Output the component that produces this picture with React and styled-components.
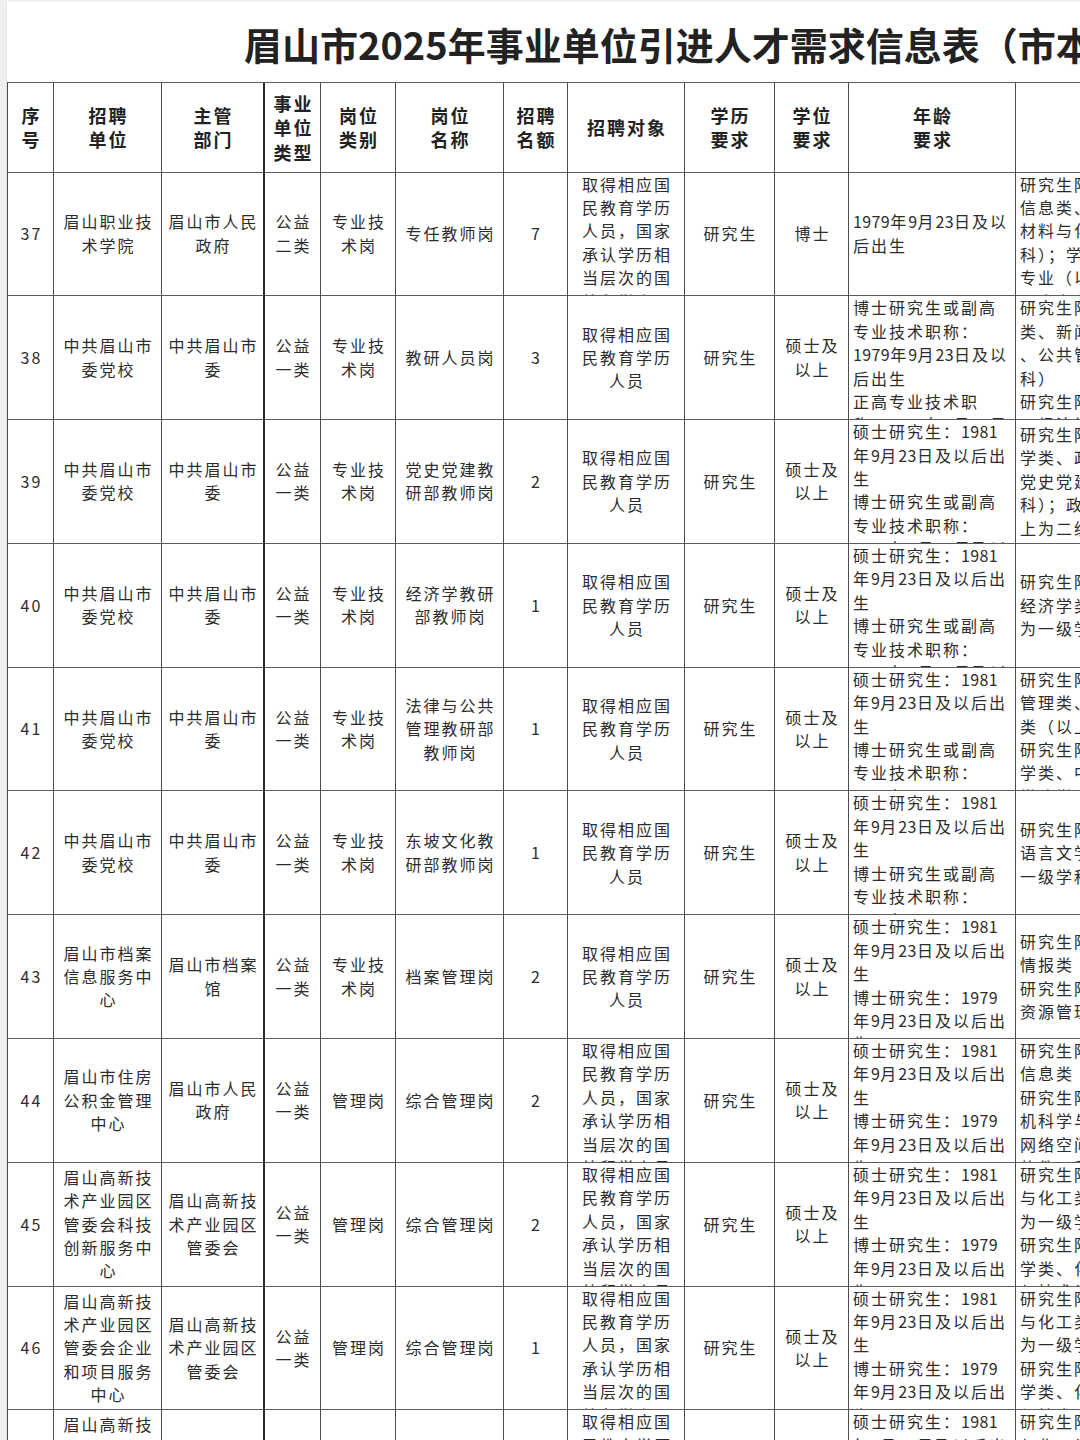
import React from "react";
import styled, { createGlobalStyle } from "styled-components";

const COLS = [46, 108, 103, 56, 75, 108, 64, 117, 90, 74, 167, 260];
const ALIGN = ["c", "c", "c", "c", "c", "c", "c", "c", "c", "c", "l", "l"];

const GlobalStyle = createGlobalStyle`
  html, body { margin: 0; padding: 0; background: #efefef; overflow: hidden; }
  body { font-family: "Noto Sans CJK SC", "Noto Sans", sans-serif; color: #333; }
`;

const Sheet = styled.div`
  margin: 2px 0 0 6px;
  background: #fff;
  width: max-content;
  min-height: 1440px;
  border-left: 1px solid #e4e4e4;
`;

const Title = styled.h1`
  margin: 0;
  height: 80px;
  box-sizing: border-box;
  padding: 2px 0 0 237px;
  display: flex;
  align-items: center;
  font-size: 38px;
  font-weight: 700;
  color: #222;
  white-space: nowrap;
`;

const Grid = styled.div`
  display: grid;
  grid-template-columns: ${COLS.map((c) => c + "px").join(" ")};
  grid-template-rows: 89.5px;
  grid-auto-rows: 123.8px;
  border-top: 1.5px solid #5a5a5a;
  border-left: 1.5px solid #4a4a4a;
`;

const Cell = styled.div`
  box-sizing: border-box;
  border-right: ${(p) => (p.$thick ? "2px solid #2a2a2a" : "1.5px solid #4d4d4d")};
  border-bottom: 1.5px solid #5e5e5e;
  overflow: hidden;
  display: flex;
  flex-direction: column;
  justify-content: safe center;
  align-items: ${(p) => (p.$left ? "flex-start" : "center")};
  padding: 0 ${(p) => (p.$left ? "2px 0 4px" : "1px 0 3px")};
`;

const HeadCell = styled(Cell)`
  color: #222;
`;

const Line = styled.div`
  white-space: nowrap;
  font-size: 16px;
  line-height: 23.4px;
  letter-spacing: 2px;
  color: #2c2c2c;
`;

const Num = styled.span`
  letter-spacing: 0.4px;
`;

const HeadLine = styled.div`
  white-space: nowrap;
  font-size: 18px;
  font-weight: 700;
  line-height: 24.5px;
  letter-spacing: 2px;
  color: #222;
`;

const HEAD = [
  ["序", "号"],
  ["招聘", "单位"],
  ["主管", "部门"],
  ["事业", "单位", "类型"],
  ["岗位", "类别"],
  ["岗位", "名称"],
  ["招聘", "名额"],
  ["招聘对象"],
  ["学历", "要求"],
  ["学位", "要求"],
  ["年龄", "要求"],
  ["专业要求"],
];

const OBJ_LONG = ["取得相应国", "民教育学历", "人员，国家", "承认学历相", "当层次的国", "外留学人员"];
const OBJ_SHORT = ["取得相应国", "民教育学历", "人员"];
const AGE_A = ["硕士研究生：1981", "年9月23日及以后出", "生", "博士研究生或副高", "专业技术职称：", "1979年9月23日及以", "后出生"];
const AGE_B = ["硕士研究生：1981", "年9月23日及以后出", "生", "博士研究生：1979", "年9月23日及以后出", "生"];
const DANG = ["中共眉山市", "委党校"];
const DANG_DEPT = ["中共眉山市", "委"];
const GX = ["眉山高新技", "术产业园区", "管委会"];
const PUB1 = ["公益", "一类"];
const TECH = ["专业技", "术岗"];
const GRAD = ["研究生"];
const MASTER = ["硕士及", "以上"];
const CHEM = ["研究生阶段：化学", "与化工类（以上", "为一级学科）", "研究生阶段：化", "学类、化学工程", "与技术类"];

const ROWS = [
  ["37", ["眉山职业技", "术学院"], ["眉山市人民", "政府"], ["公益", "二类"], TECH, ["专任教师岗"], ["7"], OBJ_LONG, GRAD, ["博士"],
    ["1979年9月23日及以", "后出生"],
    ["研究生阶段：电子", "信息类、计算机类、", "材料与化工类（一级", "科）；学科教学", "专业（以上为二级", "硕士专业学位）"]],
  ["38", DANG, DANG_DEPT, PUB1, TECH, ["教研人员岗"], ["3"], OBJ_SHORT, GRAD, MASTER,
    ["博士研究生或副高", "专业技术职称：", "1979年9月23日及以", "后出生", "正高专业技术职", "称：1974年9月23日"],
    ["研究生阶段：法学", "类、新闻传播学类", "、公共管理类（一级学", "科）", "研究生阶段：哲学类", "、经济学类"]],
  ["39", DANG, DANG_DEPT, PUB1, TECH, ["党史党建教", "研部教师岗"], ["2"], OBJ_SHORT, GRAD, MASTER, AGE_A,
    ["研究生阶段：马克思", "学类、政治学类、", "党史党建学（一级学", "科）；政治学类以", "上为二级学科"]],
  ["40", DANG, DANG_DEPT, PUB1, TECH, ["经济学教研", "部教师岗"], ["1"], OBJ_SHORT, GRAD, MASTER, AGE_A,
    ["研究生阶段：理论", "经济学类（以上", "为一级学科）"]],
  ["41", DANG, DANG_DEPT, PUB1, TECH, ["法律与公共", "管理教研部", "教师岗"], ["1"], OBJ_SHORT, GRAD, MASTER, AGE_A,
    ["研究生阶段：公共", "管理类、法学", "类（以上为一级学科）", "研究生阶段：社会", "学类、中共党史", "党建学"]],
  ["42", DANG, DANG_DEPT, PUB1, TECH, ["东坡文化教", "研部教师岗"], ["1"], OBJ_SHORT, GRAD, MASTER, AGE_A,
    ["研究生阶段：中国", "语言文学类（以上为", "一级学科）"]],
  ["43", ["眉山市档案", "信息服务中", "心"], ["眉山市档案", "馆"], PUB1, TECH, ["档案管理岗"], ["2"], OBJ_SHORT, GRAD, MASTER, AGE_B,
    ["研究生阶段：图书", "情报类", "研究生阶段：信息", "资源管理类"]],
  ["44", ["眉山市住房", "公积金管理", "中心"], ["眉山市人民", "政府"], PUB1, ["管理岗"], ["综合管理岗"], ["2"], OBJ_LONG, GRAD, MASTER, AGE_B,
    ["研究生阶段：电子", "信息类", "研究生阶段：计算", "机科学与技术、", "网络空间安全", "软件工程"]],
  ["45", ["眉山高新技", "术产业园区", "管委会科技", "创新服务中", "心"], GX, PUB1, ["管理岗"], ["综合管理岗"], ["2"], OBJ_LONG, GRAD, MASTER, AGE_B, CHEM],
  ["46", ["眉山高新技", "术产业园区", "管委会企业", "和项目服务", "中心"], GX, PUB1, ["管理岗"], ["综合管理岗"], ["1"], OBJ_LONG, GRAD, MASTER, AGE_B, CHEM],
  ["47", ["眉山高新技", "术产业园区", "管委会社会", "事业服务中", "心"], GX, PUB1, ["管理岗"], ["综合管理岗"], ["1"], OBJ_LONG, GRAD, MASTER, AGE_B, CHEM],
];

function renderText(text, first) {
  if (first) return text;
  return text.split(/(\d+)/).map((part, i) =>
    /^\d+$/.test(part) ? <Num key={i}>{part}</Num> : part
  );
}

export default function App() {
  return (
    <>
      <GlobalStyle />
      <Sheet>
        <Title>眉山市2025年事业单位引进人才需求信息表（市本级）</Title>
        <Grid>
          {HEAD.map((lines, i) => (
            <HeadCell key={"h" + i} $thick={i === 2}>
              {lines.map((l, j) => (
                <HeadLine key={j}>{l}</HeadLine>
              ))}
            </HeadCell>
          ))}
          {ROWS.map((row, r) =>
            row.map((cell, c) => {
              const lines = Array.isArray(cell) ? cell : [cell];
              return (
                <Cell key={r + "-" + c} $thick={c === 2} $left={ALIGN[c] === "l"}>
                  {lines.map((l, j) => (
                    <Line key={j}>{renderText(l, c === 0 || c === 6)}</Line>
                  ))}
                </Cell>
              );
            })
          )}
        </Grid>
      </Sheet>
    </>
  );
}
